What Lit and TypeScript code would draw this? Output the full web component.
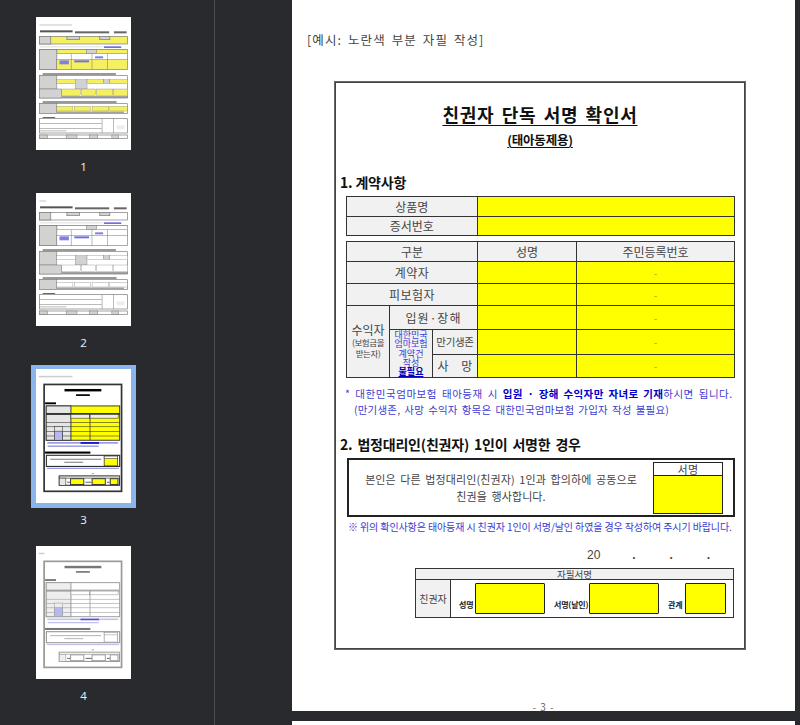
import { LitElement, html, css, svg } from "lit";
import { customElement, property } from "lit/decorators.js";

const Y = "#ffff00";
type R = [number, number, number, number, string, string?, number?];

function rects(list: R[]) {
  return list.map(
    ([x, y, w, h, fill, stroke, sw]) =>
      svg`<rect x=${x} y=${y} width=${w} height=${h} fill=${fill} stroke=${stroke ?? "none"} stroke-width=${sw ?? 0}></rect>`
  );
}

/* Miniature of the application form pages (thumbs 1 and 2). viewBox is 283x399. */
function formThumb(yellow: boolean) {
  const y = yellow ? "#f4f060" : "#ffffff";
  const g = "#d2d2d2";
  const line = "#777";
  return svg`<svg class="thumbsvg" viewBox="0 0 283 399" preserveAspectRatio="none">
    ${rects([
      [0, 0, 283, 399, "#fff"],
      [10, 22, yellow ? 97 : 20, 4, "#d4d4d4"],
      [12, 40, 97, 6, "#555"],
      [116, 43, 102, 6, "#666"],
      [232, 43, 38, 6, "#666"],
      [10, 58, 263, 23, y, line, 2],
      [10, 58, 34, 23, g, line, 2],
      [92, 58, 38, 10, g, line, 2],
      [190, 58, 30, 10, g, line, 2],
      [12, 88, 185, 3, "#ddd"],
      [202, 88, 52, 5, "#6f6fe0"],
      [10, 98, 263, 60, "#fff", line, 2],
      [62, 98, 211, 12, y, line, 1.5],
      [150, 98, 30, 12, g, line, 1.5],
      [10, 98, 52, 60, g, line, 2],
      [62, 128, 211, 30, y, line, 1.5],
      [104, 110, 1.5, 48, line],
      [166, 110, 1.5, 48, line],
      [212, 110, 1.5, 48, line],
      [70, 130, 28, 12, "#8080e0"],
      [114, 130, 44, 6, "#7070e0"],
      [176, 118, 24, 6, "#8080e0"],
      [20, 169, 218, 4, "#666"],
      [10, 176, 263, 67, "#fff", line, 2],
      [10, 176, 52, 40, g, line, 1.5],
      [62, 188, 55, 12, y, line, 1],
      [117, 188, 35, 28, g, line, 1],
      [152, 188, 50, 12, y, line, 1],
      [202, 188, 18, 12, g, line, 1],
      [220, 188, 53, 12, y, line, 1],
      [10, 216, 66, 27, g, line, 1.5],
      [77, 216, 55, 19, y, line, 1],
      [136, 216, 41, 19, y, line, 1],
      [180, 216, 49, 19, y, line, 1],
      [230, 216, 43, 19, y, line, 1],
      [77, 238, 196, 4, "#777"],
      [20, 253, 220, 4, "#666"],
      [10, 260, 263, 30, "#fff", line, 2],
      [10, 260, 52, 30, g, line, 1.5],
      [62, 268, 48, 14, y, line, 1],
      [114, 268, 48, 14, y, line, 1],
      [167, 268, 50, 14, y, line, 1],
      [220, 268, 52, 14, y, line, 1],
      [62, 284, 200, 3, "#777"],
      [20, 300, 37, 3, "#666"],
      [10, 305, 263, 43, "#fff", line, 2],
      [196, 305, 1.5, 43, line],
      [230, 305, 1.5, 43, line],
      [10, 318, 186, 1.5, line],
      [10, 333, 186, 1.5, line],
      [10, 341, 80, 1.5, line],
      [240, 325, 24, 12, "#eee"],
      [10, 354, 263, 10, "#fff", line, 2],
      [10, 354, 24, 10, g, line, 1.5],
      [90, 354, 32, 10, g, line, 1.5],
      [160, 354, 24, 10, g, line, 1.5],
      [226, 354, 20, 10, g, line, 1.5],
    ])}
  </svg>`;
}

/* Miniature of the signature page (thumbs 3 and 4), in the coordinates of the real page. */
function signThumb(active: boolean) {
  const k = active ? "#333" : "#999";
  const y = active ? Y : "#fff";
  const g = active ? "#e6e6e6" : "#eeeeee";
  const t = active ? "#000" : "#777";
  const b = active ? "#0000cc" : "#5050d8";
  const soft = active ? "#9090e0" : "#c0c0ec";
  return svg`<svg class="thumbsvg" viewBox="0 0 503 711" preserveAspectRatio="none">
    ${rects([
      [0, 0, 503, 711, "#fff"],
      [15, 36, active ? 178 : 30, 8, "#ccc"],
      [43, 82, 410, 567, "#fff", k, 9],
      [151, 106, 195, 13, t],
      [212, 134, 73, 9, t],
      [48, 177, 58, 10, t],
      [54, 196, 389, 40, y, k, 5],
      [54, 196, 131, 40, g, k, 5],
      [54, 241, 389, 137, y, k, 5],
      [54, 241, 131, 137, g, k, 5],
      [185, 241, 99, 20, active ? "#eee" : "#fff", k, 3],
      [284, 241, 151, 20, active ? "#eee" : "#fff", k, 3],
      [54, 283, 389, 3, k],
      [54, 305, 389, 3, k],
      [54, 329, 389, 3, k],
      [54, 354, 389, 3, k],
      [284, 241, 4, 137, k],
      [97, 305, 43, 73, g, k, 3],
      [97, 330, 43, 48, "#b8b8f0", k, 3],
      [60, 388, 175, 8, soft],
      [235, 388, 100, 9, b],
      [335, 388, 100, 8, soft],
      [62, 406, 270, 7, soft],
      [48, 438, 240, 11, t],
      [55, 458, 388, 59, "#fff", k, 6],
      [75, 476, 270, 6, active ? "#888" : "#bbb"],
      [150, 492, 100, 6, active ? "#888" : "#bbb"],
      [361, 462, 70, 52, y, k, 4],
      [361, 462, 70, 13, "#fff", k, 3],
      [58, 524, 380, 6, soft],
      [295, 552, 12, 6, "#aaa"],
      [123, 568, 319, 49, "#fff", k, 6],
      [123, 568, 319, 11, g, k, 3],
      [123, 579, 35, 38, g, k, 3],
      [183, 582, 70, 31, y, k, 5],
      [297, 582, 70, 31, y, k, 5],
      [393, 582, 41, 31, y, k, 5],
      [165, 598, 16, 6, "#777"],
      [262, 598, 33, 6, "#777"],
      [376, 598, 15, 6, "#777"],
    ])}
  </svg>`;
}

@customElement("pdf-thumb")
class PdfThumb extends LitElement {
  @property({ type: Number }) page = 1;
  @property({ type: Boolean }) selected = false;
  static styles = css`
    :host { display: flex; flex-direction: column; align-items: center; width: 105px; }
    .frame { width: 95px; height: 133px; border: 0 solid transparent; }
    .frame.sel { border-width: 4px 5px 5px 5px; border-color: #8ab4ec; height: 134px; }
    .inner { width: 100%; height: 100%; overflow: hidden; background: #fff; filter: blur(0.6px); }
    .thumbsvg { display: block; width: 100%; height: 100%; }
    .label { font: 11.5px/14px "Open Sans", sans-serif; color: #f0f0f0; margin-top: 10px; }
    .frame.sel + .label { margin-top: 5px; }
  `;
  render() {
    const p = this.page;
    return html`
      <div class="frame ${this.selected ? "sel" : ""}">
        <div class="inner">
          ${p === 1 ? formThumb(true) : p === 2 ? formThumb(false) : signThumb(p === 3)}
        </div>
      </div>
      <div class="label">${p}</div>
    `;
  }
}

@customElement("app-root")
class AppRoot extends LitElement {
  static styles = css`
    :host {
      display: grid;
      grid-template-columns: 214px 1px 1fr;
      width: 800px;
      height: 725px;
      overflow: hidden;
      background: #292a2d;
      font-family: "Noto Sans CJK KR", sans-serif;
      color: #333;
    }
    .side { display: flex; flex-direction: column; align-items: center; padding: 17px 47px 0 0; box-sizing: border-box; }
    .side pdf-thumb:nth-child(1) { margin-bottom: 19px; }
    .side pdf-thumb:nth-child(2) { margin-bottom: 15px; }
    .side pdf-thumb:nth-child(3) { margin-bottom: 19px; }
    .rule { background: #4c4d4f; }
    .main { padding-left: 77px; padding-right: 5px; overflow: hidden; height: 725px; }
    .page { background: #fff; height: 711px; display: flex; flex-direction: column; overflow: hidden; }
    .next { background: #fff; height: 10px; margin-top: 10px; }
    .example {
      flex: none; margin: 31px 0 0 15px; font: 400 12.5px/18px "Noto Sans CJK KR", sans-serif;
      letter-spacing: 1.1px; word-spacing: 2px; color: #444;
    }
    .doc {
      flex: none; margin: 33px 0 0 43px; width: 410px; height: 567px; box-sizing: border-box;
      border: 1px solid #444; outline: 0.5px solid #666;
      display: flex; flex-direction: column; color: #222;
    }
    h1 {
      margin: 18px 0 0; text-align: center; font-size: 18px; line-height: 26px; font-weight: 700;
      letter-spacing: 0.75px; word-spacing: 2.5px; color: #111; text-decoration: underline; text-underline-offset: 3px;
    }
    h2 {
      margin: 4px 0 0; text-align: center; font-size: 12.5px; line-height: 18px; font-weight: 700;
      color: #111; text-decoration: underline; text-underline-offset: 2px; letter-spacing: -0.2px;
    }
    h3 { flex: none; margin: 0 0 0 4px; font-size: 14px; line-height: 20px; font-weight: 700; color: #111; letter-spacing: -0.2px; }
    h3.one { margin-top: 23px; }
    h3.two { margin-top: 16px; word-spacing: 2px; }
    .grid {
      flex: none; display: grid; margin-left: 10px; width: 389px; box-sizing: border-box; gap: 1px;
      background: #333; border: 1.5px solid #333; font-size: 12px; color: #444;
    }
    .grid > div { display: flex; align-items: center; justify-content: center; background: #f1f1f1; min-width: 0; overflow: hidden; white-space: nowrap; }
    .grid > div.y { background: #ffff00; color: #b8a020; font-size: 10px; }
    .t1 { margin-top: 4px; grid-template-columns: 129.5px 1fr; grid-template-rows: 18.5px 18.5px; }
    .t2 { margin-top: 5px; grid-template-columns: 42px 42px 44px 98px 1fr; grid-template-rows: 18.5px 21px 21px 23px 24px 22.5px; }
    .c5 { grid-column: span 3; }
    .big { letter-spacing: 0.5px; }
    .grid > .ben { grid-column: 1; grid-row: 4 / span 3; flex-direction: column; line-height: 11px; }
    .ben b { font-weight: 400; font-size: 12px; line-height: 14px; }
    .ben span { font-size: 8.5px; letter-spacing: -0.4px; }
    .hos { grid-column: span 2; letter-spacing: 1px; }
    .grid > .blue {
      grid-row: span 2; flex-direction: column; color: #3a3ad0; font-size: 9px; line-height: 9.4px;
      text-align: center;
    }
    .blue strong { color: #0000c0; text-decoration: underline; font-weight: 700; }
    .grid > .tight { font-size: 10.5px; letter-spacing: -0.3px; }
    .gap { word-spacing: 10px; }
    .note { flex: none; margin: 8px 0 0 9px; font-size: 10.5px; line-height: 16px; color: #4040d0; letter-spacing: 0.2px; word-spacing: 1.5px; white-space: nowrap; }
    .note .l1 { letter-spacing: 0.55px; word-spacing: 2px; }
    .note strong { color: #0000c8; font-weight: 700; letter-spacing: 0.35px; }
    .note .l2 { padding-left: 9px; }
    .box {
      flex: none; margin: 4px 0 0 11px; width: 388px; height: 59px; box-sizing: border-box; border: 2px solid #222;
      display: flex; align-items: center;
    }
    .say {
      flex: 1; text-align: center; font-size: 11px; line-height: 17px; color: #444;
      letter-spacing: 0.1px; word-spacing: 2px;
    }
    .sig { width: 70px; height: 52px; box-sizing: border-box; border: 1px solid #222; margin: 0 10px 0 0; display: flex; flex-direction: column; background: #ffff00; }
    .sig div { height: 12px; background: #fff; border-bottom: 1px solid #222; text-align: center; font-size: 11px; line-height: 12px; color: #444; letter-spacing: 0.5px; }
    .warn { flex: none; margin: 2px 0 0 12px; font-size: 10px; line-height: 15px; color: #3a3ad0; white-space: nowrap; letter-spacing: -0.11px; }
    .date { flex: none; margin: 12px 0 0 251px; display: flex; font: 12px/18px "Liberation Sans", sans-serif; color: #444; }
    .date span { width: 38px; font-weight: 700; }
    .date .yr { width: 46px; font-weight: 400; }
    .sign {
      flex: none; margin: 4px 0 0 79px; width: 319px; height: 50px; box-sizing: border-box; border: 1.5px solid #333;
      display: grid; grid-template-columns: 34px 1fr; grid-template-rows: 10px 1fr; gap: 1px; background: #333;
    }
    .sign .hd { grid-column: span 2; background: #f1f1f1; font-size: 9.5px; line-height: 10px; text-align: center; color: #444; overflow: hidden; }
    .sign .who { background: #f1f1f1; display: flex; align-items: center; justify-content: center; font-size: 10px; color: #444; }
    .sign .cells { background: #fff; display: flex; align-items: center; padding-left: 8px; }
    .cells label { font-size: 8px; font-weight: 700; color: #222; line-height: 12px; align-self: flex-end; margin-bottom: 6.5px; white-space: nowrap; letter-spacing: -0.2px; box-sizing: border-box; }
    .l-a { width: 16px; }
    .l-b { width: 44px; padding-left: 9px; }
    .l-c { width: 26px; padding-left: 9px; }
    .cells i { display: block; height: 31px; width: 70px; box-sizing: border-box; border: 1.5px solid #222; border-radius: 1px; background: #ffff00; }
    .cells i.short { width: 41px; }
    .foot { flex: none; margin-top: 51px; text-align: center; font: 10px/14px "Noto Sans CJK KR", sans-serif; color: #666; letter-spacing: 1px; }
  `;
  render() {
    return html`
      <div class="side">
        <pdf-thumb page="1"></pdf-thumb>
        <pdf-thumb page="2"></pdf-thumb>
        <pdf-thumb page="3" selected></pdf-thumb>
        <pdf-thumb page="4"></pdf-thumb>
      </div>
      <div class="rule"></div>
      <div class="main">
        <div class="page">
          <div class="example">[예시: 노란색 부분 자필 작성]</div>
          <div class="doc">
            <h1>친권자 단독 서명 확인서</h1>
            <h2>(태아동제용)</h2>
            <h3 class="one">1. 계약사항</h3>
            <div class="grid t1">
              <div>상품명</div><div class="y"></div>
              <div>증서번호</div><div class="y"></div>
            </div>
            <div class="grid t2">
              <div class="c5">구분</div><div>성명</div><div>주민등록번호</div>
              <div class="c5 big">계약자</div><div class="y"></div><div class="y">-</div>
              <div class="c5 big">피보험자</div><div class="y"></div><div class="y">-</div>
              <div class="ben"><b>수익자</b><span>(보험금을</span><span>받는자)</span></div>
              <div class="hos">입원·장해</div><div class="y"></div><div class="y">-</div>
              <div class="blue">대한민국<br />엄마보험<br />계약건<br />작성<br /><strong>불필요</strong></div>
              <div class="tight">만기생존</div><div class="y"></div><div class="y">-</div>
              <div class="gap">사 망</div><div class="y"></div><div class="y">-</div>
            </div>
            <div class="note">
              <div class="l1">* 대한민국엄마보험 태아등재 시 <strong>입원 · 장해 수익자만 자녀로 기재</strong>하시면 됩니다.</div>
              <div class="l2">(만기생존, 사망 수익자 항목은 대한민국엄마보험 가입자 작성 불필요)</div>
            </div>
            <h3 class="two">2. 법정대리인(친권자) 1인이 서명한 경우</h3>
            <div class="box">
              <div class="say">본인은 다른 법정대리인(친권자) 1인과 합의하에 공동으로<br />친권을 행사합니다.</div>
              <div class="sig"><div>서명</div></div>
            </div>
            <div class="warn">※ 위의 확인사항은 태아등재 시 친권자 1인이 서명/날인 하였을 경우 작성하여 주시기 바랍니다.</div>
            <div class="date"><span class="yr">20</span><span>.</span><span>.</span><span>.</span></div>
            <div class="sign">
              <div class="hd">자필서명</div>
              <div class="who">친권자</div>
              <div class="cells">
                <label class="l-a">성명</label><i></i>
                <label class="l-b">서명(날인)</label><i></i>
                <label class="l-c">관계</label><i class="short"></i>
              </div>
            </div>
          </div>
          <div class="foot">- 3 -</div>
        </div>
        <div class="next"></div>
      </div>
    `;
  }
}
